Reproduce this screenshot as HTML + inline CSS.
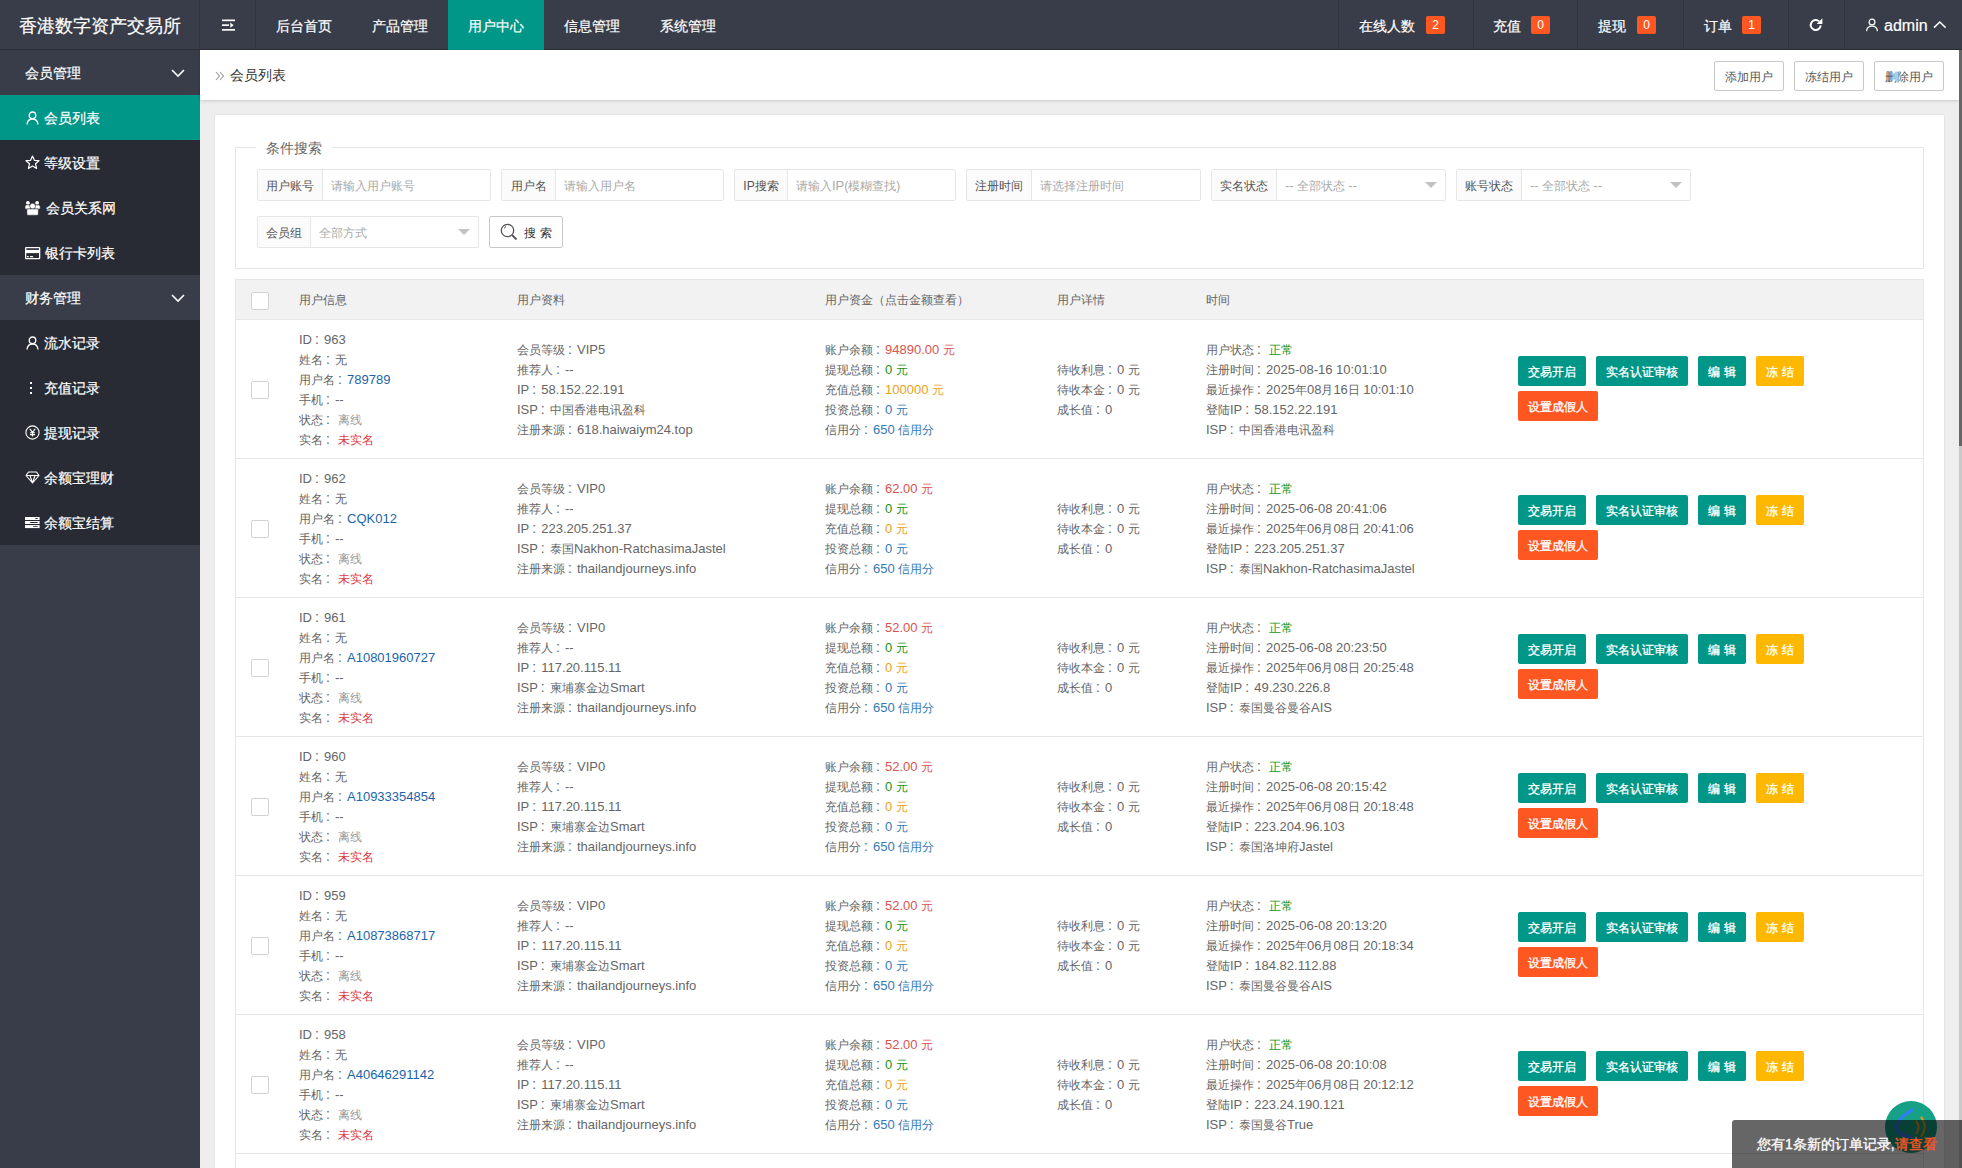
<!DOCTYPE html><html><head><meta charset="utf-8"><title>会员列表</title><style>
*{margin:0;padding:0;box-sizing:border-box}
html,body{width:1962px;height:1168px;overflow:hidden}
body{position:relative;background:#eeeeee;font-family:"Liberation Sans",sans-serif;font-size:12px;color:#666}
.abs{position:absolute}
#hdr{left:0;top:0;width:1962px;height:50px;background:#393D49}
#hdr .line{position:absolute;top:49px;left:0;width:1962px;height:1px;background:#2c2f38}
.sep{position:absolute;top:0;width:1px;height:49px;background:#30343e}
.ht{position:absolute;top:0;height:50px;line-height:50px;font-size:14px;color:#fff;white-space:nowrap}
.badge{position:absolute;top:16px;height:18px;width:19px;line-height:18px;text-align:center;background:#FF5722;color:#fff;font-size:12px;border-radius:2px}
#side{left:0;top:50px;width:200px;height:1118px;background:#393D49}
.sg{position:absolute;left:0;width:200px;height:45px;line-height:45px;font-size:14px;color:#fff}
.si{position:absolute;left:0;width:200px;height:45px;line-height:45px;font-size:14px;color:#fff;background:#282B33}
.si.on{background:#009688}
.ico{position:absolute}
#main{left:200px;top:50px;width:1759px;height:1118px;background:#eeeeee;overflow:hidden}
#sb{left:1959px;top:50px;width:3px;height:1118px;background:#c9c9c9}
#sbt{left:1959px;top:50px;width:3px;height:396px;background:#666}
#crumb{left:200px;top:50px;width:1759px;height:50px;background:#fff;box-shadow:0 1px 3px rgba(0,0,0,.16)}
.tbtn{position:absolute;top:61px;height:30px;width:70px;border:1px solid #c9c9c9;border-radius:2px;background:#fff;color:#555;font-size:12px;line-height:28px;text-align:center}
#card{left:215px;top:115px;width:1729px;height:1100px;background:#fff;box-shadow:0 0 2px rgba(0,0,0,.12)}
#fs{left:235px;top:147px;width:1689px;height:122px;border:1px solid #e6e6e6}
#legend{left:256px;top:137px;height:20px;line-height:20px;padding:0 10px;background:#fff;font-size:14px;color:#666}
.ig{position:absolute;height:32px;border:1px solid #e6e6e6;border-radius:2px;background:#fff}
.ig .lb{position:absolute;left:0;top:0;height:30px;line-height:30px;background:#FBFBFB;border-right:1px solid #e6e6e6;color:#555;font-size:12px;text-align:center}
.ig .ph{position:absolute;top:0;height:30px;line-height:30px;color:#aaa;font-size:12px;white-space:nowrap}
.ig .arr{position:absolute;top:12px;width:0;height:0;border-left:6px solid transparent;border-right:6px solid transparent;border-top:6px solid #c2c2c2}
#tbl{left:235px;top:279px;width:1689px;height:1000px;border:1px solid #e6e6e6;border-bottom:none}
#thead{left:236px;top:280px;width:1687px;height:39px;background:#f2f2f2}
.hline{position:absolute;left:236px;width:1687px;height:1px;background:#e6e6e6}
.th{position:absolute;top:280px;height:39px;line-height:39px;color:#666;font-size:12px;white-space:nowrap}
.cb{position:absolute;width:18px;height:18px;border:1px solid #d2d2d2;border-radius:2px;background:#fff}
.ln{position:absolute;height:20px;line-height:20px;white-space:nowrap;color:#666}
.gy{color:#999}
.red{color:#DC3C45}
.blu{color:#1B64AC}
.rd{color:#D9534F}
.gr{color:#179317}
.og{color:#EC9F18}
.bl{color:#337AB7}
.btn{position:absolute;height:30px;line-height:30px;border-radius:2px;color:#fff;font-size:12px;text-align:center;white-space:nowrap;-webkit-text-stroke:0.3px #fff}
.bt{background:#009688}
.bw{background:#FFB800}
.bd{background:#FF5722}
.ht,.sg>span,.si>span,.ln,.th,.ig .lb,.ig .ph,#legend,.tbtn,.btn{padding-top:1px}
.l{font-size:13px}
.ht,.sg,.si{-webkit-text-stroke:0.2px #fff}
.c{display:inline-block;width:12px;text-indent:2.9px;font-size:14px;line-height:10px}
#toast{left:1732px;top:1120px;width:240px;height:60px;background:rgba(0,0,0,.6);border-radius:3px}
</style></head><body><div id="hdr" class="abs"><div class="line"></div><div class="ht" style="left:19px;font-size:18px;color:#fff">香港数字资产交易所</div><div class="sep" style="left:199px"></div><div class="sep" style="left:255px"></div><div class="sep" style="left:1338px"></div><div class="sep" style="left:1473px"></div><div class="sep" style="left:1577px"></div><div class="sep" style="left:1683px"></div><div class="sep" style="left:1788px"></div><div class="sep" style="left:1844px"></div><svg class="abs" style="left:221px;top:18px" width="16" height="14" viewBox="0 0 16 14"><rect x="1" y="1.5" width="13" height="1.7" fill="#fff"/><rect x="1" y="6.3" width="7" height="1.7" fill="#fff"/><path d="M9.3 4.6 L12.6 7.15 L9.3 9.7 Z" fill="#fff"/><rect x="1" y="11" width="13" height="1.7" fill="#fff"/></svg><div class="abs" style="left:448px;top:0;width:96px;height:50px;background:#009688"></div><div class="ht" style="left:276px">后台首页</div><div class="ht" style="left:372px">产品管理</div><div class="ht" style="left:468px">用户中心</div><div class="ht" style="left:564px">信息管理</div><div class="ht" style="left:660px">系统管理</div><div class="ht" style="left:1359px">在线人数</div><div class="badge" style="left:1426px">2</div><div class="ht" style="left:1493px">充值</div><div class="badge" style="left:1531px">0</div><div class="ht" style="left:1598px">提现</div><div class="badge" style="left:1637px">0</div><div class="ht" style="left:1704px">订单</div><div class="badge" style="left:1742px">1</div><svg class="abs" style="left:1808px;top:18px" width="15" height="14" viewBox="0 0 15 14"><path d="M12.7 7.4 A5 5 0 1 1 11.2 3.4" fill="none" stroke="#fff" stroke-width="2"/><path d="M14.4 0.2 L14.4 5.9 L8.7 5.9 Z" fill="#fff"/></svg><svg class="abs" style="left:1865px;top:18px" width="13" height="14" viewBox="0 0 13 14"><circle cx="7" cy="4" r="2.9" fill="none" stroke="#fff" stroke-width="1.2"/><path d="M1.6 13.2 Q2 8.2 7 8.2 Q12 8.2 12.4 13.2" fill="none" stroke="#fff" stroke-width="1.2"/></svg><div class="ht" style="left:1884px;font-size:16px">admin</div><svg class="abs" style="left:1933px;top:20px" width="14" height="9" viewBox="0 0 14 9"><path d="M1 7.6 L6.8 2 L12.6 7.6" fill="none" stroke="#fff" stroke-width="1.5"/></svg></div><div id="side" class="abs"><div class="sg" style="top:0"><span class="abs" style="left:25px">会员管理</span><svg class="abs" style="left:171px;top:19px" width="14" height="9" viewBox="0 0 14 9"><path d="M1 1 L7 7 L13 1" fill="none" stroke="#fff" stroke-width="1.6"/></svg></div><div class="si on" style="top:45px"><svg class="ico" style="left:26px;top:16px" width="13" height="14" viewBox="0 0 13 14"><circle cx="6.5" cy="4.3" r="3.3" fill="none" stroke="#fff" stroke-width="1.3"/><path d="M1 13.5 Q1.5 8 6.5 8 Q11.5 8 12 13.5" fill="none" stroke="#fff" stroke-width="1.3"/></svg><span class="abs" style="left:44px">会员列表</span></div><div class="si" style="top:90px"><svg class="ico" style="left:25px;top:15px" width="15" height="15" viewBox="0 0 15 15"><path d="M7.5 1 L9.4 5.3 L14 5.7 L10.5 8.8 L11.6 13.5 L7.5 11 L3.4 13.5 L4.5 8.8 L1 5.7 L5.6 5.3 Z" fill="none" stroke="#fff" stroke-width="1.2" stroke-linejoin="round"/></svg><span class="abs" style="left:44px">等级设置</span></div><div class="si" style="top:135px"><svg class="ico" style="left:25px;top:16px" width="16" height="15" viewBox="0 0 16 15"><circle cx="2.9" cy="1.9" r="1.9" fill="#fff"/><circle cx="12.1" cy="1.9" r="1.9" fill="#fff"/><path d="M0 8 L0 5.4 Q0 3.9 1.5 3.9 L4.3 3.9 Q5.6 3.9 5.6 5.4 L5.6 8 Z" fill="#fff" stroke="#282B33" stroke-width="0.6"/><path d="M9.6 8 L9.6 5.4 Q9.6 3.9 11 3.9 L13.7 3.9 Q15.2 3.9 15.2 5.4 L15.2 8 Z" fill="#fff" stroke="#282B33" stroke-width="0.6"/><circle cx="7.6" cy="5.1" r="2.9" fill="#fff" stroke="#282B33" stroke-width="0.6"/><path d="M1.9 8.4 Q1.9 8 2.4 8 L12.8 8 Q13.3 8 13.3 8.4 L13.3 13 Q13.3 14.2 12 14.2 L3.2 14.2 Q1.9 14.2 1.9 13 Z" fill="#fff" stroke="#282B33" stroke-width="0.5"/></svg><span class="abs" style="left:46px">会员关系网</span></div><div class="si" style="top:180px"><svg class="ico" style="left:25px;top:17px" width="16" height="13" viewBox="0 0 16 13"><rect x="0.65" y="0.65" width="14" height="11" rx="0.6" fill="none" stroke="#fff" stroke-width="1.3"/><rect x="0.6" y="2.9" width="14.1" height="3.2" fill="#fff"/><rect x="2" y="9" width="1.9" height="1.2" rx="0.5" fill="#fff"/><rect x="5" y="9" width="3.1" height="1.2" rx="0.5" fill="#fff"/></svg><span class="abs" style="left:45px">银行卡列表</span></div><div class="sg" style="top:225px"><span class="abs" style="left:25px">财务管理</span><svg class="abs" style="left:171px;top:19px" width="14" height="9" viewBox="0 0 14 9"><path d="M1 1 L7 7 L13 1" fill="none" stroke="#fff" stroke-width="1.6"/></svg></div><div class="si" style="top:270px"><svg class="ico" style="left:26px;top:16px" width="13" height="14" viewBox="0 0 13 14"><circle cx="6.5" cy="4.3" r="3.3" fill="none" stroke="#fff" stroke-width="1.3"/><path d="M1 13.5 Q1.5 8 6.5 8 Q11.5 8 12 13.5" fill="none" stroke="#fff" stroke-width="1.3"/></svg><span class="abs" style="left:44px">流水记录</span></div><div class="si" style="top:315px"><svg class="ico" style="left:29px;top:16px" width="4" height="14" viewBox="0 0 4 14"><rect x="1" y="1" width="2" height="2" fill="#fff"/><rect x="1" y="6" width="2" height="2" fill="#fff"/><rect x="1" y="11" width="2" height="2" fill="#fff"/></svg><span class="abs" style="left:44px">充值记录</span></div><div class="si" style="top:360px"><svg class="ico" style="left:25px;top:15px" width="15" height="15" viewBox="0 0 15 15"><circle cx="7.5" cy="7.5" r="6.6" fill="none" stroke="#fff" stroke-width="1.1"/><path d="M4.8 3.8 L7.5 7.3 L10.2 3.8 M7.5 7.3 L7.5 11.5 M5 7.8 L10 7.8 M5 9.6 L10 9.6" fill="none" stroke="#fff" stroke-width="1.1"/></svg><span class="abs" style="left:44px">提现记录</span></div><div class="si" style="top:405px"><svg class="ico" style="left:25px;top:16px" width="15" height="13" viewBox="0 0 15 13"><path d="M3.5 1 L11.5 1 L14 4.5 L7.5 12 L1 4.5 Z M1 4.5 L14 4.5 M5 4.5 L7.5 12 L10 4.5" fill="none" stroke="#fff" stroke-width="1.1" stroke-linejoin="round"/></svg><span class="abs" style="left:44px">余额宝理财</span></div><div class="si" style="top:450px"><svg class="ico" style="left:25px;top:17px" width="15" height="12" viewBox="0 0 15 12"><rect x="0" y="0" width="14.6" height="3" fill="#fff"/><rect x="0" y="4" width="14.6" height="3" fill="#fff"/><rect x="0" y="8.1" width="14.6" height="3" fill="#fff"/><rect x="10.2" y="1.1" width="2.6" height="0.9" rx="0.4" fill="#282B33"/><rect x="5" y="5.1" width="7.8" height="0.9" rx="0.4" fill="#282B33"/><rect x="8" y="9.2" width="4.8" height="0.9" rx="0.4" fill="#282B33"/></svg><span class="abs" style="left:44px">余额宝结算</span></div></div><div id="main" class="abs"></div><div id="crumb" class="abs"></div><svg class="abs" style="left:215px;top:71px" width="10" height="10" viewBox="0 0 10 10"><path d="M1 1 L4.5 5 L1 9 M5 1 L8.5 5 L5 9" fill="none" stroke="#999" stroke-width="1.1"/></svg><div class="abs" style="left:230px;top:65px;height:20px;line-height:20px;font-size:14px;color:#333">会员列表</div><div class="tbtn" style="left:1714px">添加用户</div><div class="tbtn" style="left:1794px">冻结用户</div><div class="tbtn" style="left:1874px">删除用户</div><div id="card" class="abs"></div><div id="fs" class="abs"></div><div id="legend" class="abs">条件搜索</div><div class="ig" style="left:257px;top:169px;width:234px"><div class="lb" style="width:65px">用户账号</div><div class="ph" style="left:73px">请输入用户账号</div></div><div class="ig" style="left:501px;top:169px;width:223px"><div class="lb" style="width:54px">用户名</div><div class="ph" style="left:62px">请输入用户名</div></div><div class="ig" style="left:734px;top:169px;width:222px"><div class="lb" style="width:53px">IP搜索</div><div class="ph" style="left:61px">请输入<span class="l">IP</span>(模糊查找)</div></div><div class="ig" style="left:966px;top:169px;width:235px"><div class="lb" style="width:65px">注册时间</div><div class="ph" style="left:73px">请选择注册时间</div></div><div class="ig" style="left:1211px;top:169px;width:235px"><div class="lb" style="width:65px">实名状态</div><div class="ph" style="left:73px"><span class="l">--</span> 全部状态 <span class="l">--</span></div><div class="arr" style="left:213px"></div></div><div class="ig" style="left:1456px;top:169px;width:235px"><div class="lb" style="width:65px">账号状态</div><div class="ph" style="left:73px"><span class="l">--</span> 全部状态 <span class="l">--</span></div><div class="arr" style="left:213px"></div></div><div class="ig" style="left:257px;top:216px;width:222px"><div class="lb" style="width:53px">会员组</div><div class="ph" style="left:61px">全部方式</div><div class="arr" style="left:200px"></div></div><div class="abs" style="left:489px;top:216px;width:74px;height:32px;border:1px solid #c9c9c9;border-radius:2px;background:#fff"></div><svg class="abs" style="left:500px;top:223px" width="18" height="18" viewBox="0 0 18 18"><circle cx="7.5" cy="7.5" r="6.2" fill="none" stroke="#555" stroke-width="1.3"/><path d="M12 12 L16.5 16.5" stroke="#555" stroke-width="1.8"/><path d="M4.5 5.5 Q4.5 4 6 3.5" fill="none" stroke="#555" stroke-width="1"/></svg><div class="abs" style="left:524px;top:223px;height:20px;line-height:20px;font-size:12px;color:#333;letter-spacing:4px">搜索</div><div id="tbl" class="abs"></div><div id="thead" class="abs"></div><div class="hline" style="top:319px"></div><div class="cb" style="left:251px;top:292px"></div><div class="th" style="left:299px">用户信息</div><div class="th" style="left:517px">用户资料</div><div class="th" style="left:825px">用户资金（点击金额查看）</div><div class="th" style="left:1057px">用户详情</div><div class="th" style="left:1206px">时间</div><div class="cb" style="left:251px;top:381px"></div><div class="ln" style="left:299px;top:329px"><span class="l">ID</span><span class="c">:</span><span class="l">963</span></div><div class="ln" style="left:299px;top:349px">姓名<span class="c">:</span>无</div><div class="ln" style="left:299px;top:369px">用户名<span class="c">:</span><span class="blu"><span class="l">789789</span></span></div><div class="ln" style="left:299px;top:389px">手机<span class="c">:</span><span class="l">--</span></div><div class="ln" style="left:299px;top:409px">状态<span class="c">:</span> <span class="gy">离线</span></div><div class="ln" style="left:299px;top:429px">实名<span class="c">:</span> <span class="red">未实名</span></div><div class="ln" style="left:517px;top:339px">会员等级<span class="c">:</span><span class="l">VIP5</span></div><div class="ln" style="left:517px;top:359px">推荐人<span class="c">:</span><span class="l">--</span></div><div class="ln" style="left:517px;top:379px"><span class="l">IP</span><span class="c">:</span><span class="l">58.152.22.191</span></div><div class="ln" style="left:517px;top:399px"><span class="l">ISP</span><span class="c">:</span>中国香港电讯盈科</div><div class="ln" style="left:517px;top:419px">注册来源<span class="c">:</span><span class="l">618.haiwaiym24.top</span></div><div class="ln" style="left:825px;top:339px">账户余额<span class="c">:</span><span class="rd"><span class="l">94890.00</span> 元</span></div><div class="ln" style="left:825px;top:359px">提现总额<span class="c">:</span><span class="gr"><span class="l">0</span> 元</span></div><div class="ln" style="left:825px;top:379px">充值总额<span class="c">:</span><span class="og"><span class="l">100000</span> 元</span></div><div class="ln" style="left:825px;top:399px">投资总额<span class="c">:</span><span class="bl"><span class="l">0</span> 元</span></div><div class="ln" style="left:825px;top:419px">信用分<span class="c">:</span><span class="bl"><span class="l">650</span> 信用分</span></div><div class="ln" style="left:1057px;top:359px">待收利息<span class="c">:</span><span class="l">0</span> 元</div><div class="ln" style="left:1057px;top:379px">待收本金<span class="c">:</span><span class="l">0</span> 元</div><div class="ln" style="left:1057px;top:399px">成长值<span class="c">:</span><span class="l">0</span></div><div class="ln" style="left:1206px;top:339px">用户状态<span class="c">:</span> <span class="gr">正常</span></div><div class="ln" style="left:1206px;top:359px">注册时间<span class="c">:</span><span class="l">2025-08-16 10:01:10</span></div><div class="ln" style="left:1206px;top:379px">最近操作<span class="c">:</span><span class="l">2025</span>年<span class="l">08</span>月<span class="l">16</span>日 <span class="l">10:01:10</span></div><div class="ln" style="left:1206px;top:399px">登陆<span class="l">IP</span><span class="c">:</span><span class="l">58.152.22.191</span></div><div class="ln" style="left:1206px;top:419px"><span class="l">ISP</span><span class="c">:</span>中国香港电讯盈科</div><div class="btn bt" style="left:1518px;top:356px;width:68px">交易开启</div><div class="btn bt" style="left:1596px;top:356px;width:92px">实名认证审核</div><div class="btn bt" style="left:1698px;top:356px;width:48px;letter-spacing:4px;text-indent:4px">编辑</div><div class="btn bw" style="left:1756px;top:356px;width:48px;letter-spacing:4px;text-indent:4px">冻结</div><div class="btn bd" style="left:1518px;top:391px;width:80px">设置成假人</div><div class="hline" style="top:458px"></div><div class="cb" style="left:251px;top:520px"></div><div class="ln" style="left:299px;top:468px"><span class="l">ID</span><span class="c">:</span><span class="l">962</span></div><div class="ln" style="left:299px;top:488px">姓名<span class="c">:</span>无</div><div class="ln" style="left:299px;top:508px">用户名<span class="c">:</span><span class="blu"><span class="l">CQK012</span></span></div><div class="ln" style="left:299px;top:528px">手机<span class="c">:</span><span class="l">--</span></div><div class="ln" style="left:299px;top:548px">状态<span class="c">:</span> <span class="gy">离线</span></div><div class="ln" style="left:299px;top:568px">实名<span class="c">:</span> <span class="red">未实名</span></div><div class="ln" style="left:517px;top:478px">会员等级<span class="c">:</span><span class="l">VIP0</span></div><div class="ln" style="left:517px;top:498px">推荐人<span class="c">:</span><span class="l">--</span></div><div class="ln" style="left:517px;top:518px"><span class="l">IP</span><span class="c">:</span><span class="l">223.205.251.37</span></div><div class="ln" style="left:517px;top:538px"><span class="l">ISP</span><span class="c">:</span>泰国<span class="l">Nakhon-RatchasimaJastel</span></div><div class="ln" style="left:517px;top:558px">注册来源<span class="c">:</span><span class="l">thailandjourneys.info</span></div><div class="ln" style="left:825px;top:478px">账户余额<span class="c">:</span><span class="rd"><span class="l">62.00</span> 元</span></div><div class="ln" style="left:825px;top:498px">提现总额<span class="c">:</span><span class="gr"><span class="l">0</span> 元</span></div><div class="ln" style="left:825px;top:518px">充值总额<span class="c">:</span><span class="og"><span class="l">0</span> 元</span></div><div class="ln" style="left:825px;top:538px">投资总额<span class="c">:</span><span class="bl"><span class="l">0</span> 元</span></div><div class="ln" style="left:825px;top:558px">信用分<span class="c">:</span><span class="bl"><span class="l">650</span> 信用分</span></div><div class="ln" style="left:1057px;top:498px">待收利息<span class="c">:</span><span class="l">0</span> 元</div><div class="ln" style="left:1057px;top:518px">待收本金<span class="c">:</span><span class="l">0</span> 元</div><div class="ln" style="left:1057px;top:538px">成长值<span class="c">:</span><span class="l">0</span></div><div class="ln" style="left:1206px;top:478px">用户状态<span class="c">:</span> <span class="gr">正常</span></div><div class="ln" style="left:1206px;top:498px">注册时间<span class="c">:</span><span class="l">2025-06-08 20:41:06</span></div><div class="ln" style="left:1206px;top:518px">最近操作<span class="c">:</span><span class="l">2025</span>年<span class="l">06</span>月<span class="l">08</span>日 <span class="l">20:41:06</span></div><div class="ln" style="left:1206px;top:538px">登陆<span class="l">IP</span><span class="c">:</span><span class="l">223.205.251.37</span></div><div class="ln" style="left:1206px;top:558px"><span class="l">ISP</span><span class="c">:</span>泰国<span class="l">Nakhon-RatchasimaJastel</span></div><div class="btn bt" style="left:1518px;top:495px;width:68px">交易开启</div><div class="btn bt" style="left:1596px;top:495px;width:92px">实名认证审核</div><div class="btn bt" style="left:1698px;top:495px;width:48px;letter-spacing:4px;text-indent:4px">编辑</div><div class="btn bw" style="left:1756px;top:495px;width:48px;letter-spacing:4px;text-indent:4px">冻结</div><div class="btn bd" style="left:1518px;top:530px;width:80px">设置成假人</div><div class="hline" style="top:597px"></div><div class="cb" style="left:251px;top:659px"></div><div class="ln" style="left:299px;top:607px"><span class="l">ID</span><span class="c">:</span><span class="l">961</span></div><div class="ln" style="left:299px;top:627px">姓名<span class="c">:</span>无</div><div class="ln" style="left:299px;top:647px">用户名<span class="c">:</span><span class="blu"><span class="l">A10801960727</span></span></div><div class="ln" style="left:299px;top:667px">手机<span class="c">:</span><span class="l">--</span></div><div class="ln" style="left:299px;top:687px">状态<span class="c">:</span> <span class="gy">离线</span></div><div class="ln" style="left:299px;top:707px">实名<span class="c">:</span> <span class="red">未实名</span></div><div class="ln" style="left:517px;top:617px">会员等级<span class="c">:</span><span class="l">VIP0</span></div><div class="ln" style="left:517px;top:637px">推荐人<span class="c">:</span><span class="l">--</span></div><div class="ln" style="left:517px;top:657px"><span class="l">IP</span><span class="c">:</span><span class="l">117.20.115.11</span></div><div class="ln" style="left:517px;top:677px"><span class="l">ISP</span><span class="c">:</span>柬埔寨金边<span class="l">Smart</span></div><div class="ln" style="left:517px;top:697px">注册来源<span class="c">:</span><span class="l">thailandjourneys.info</span></div><div class="ln" style="left:825px;top:617px">账户余额<span class="c">:</span><span class="rd"><span class="l">52.00</span> 元</span></div><div class="ln" style="left:825px;top:637px">提现总额<span class="c">:</span><span class="gr"><span class="l">0</span> 元</span></div><div class="ln" style="left:825px;top:657px">充值总额<span class="c">:</span><span class="og"><span class="l">0</span> 元</span></div><div class="ln" style="left:825px;top:677px">投资总额<span class="c">:</span><span class="bl"><span class="l">0</span> 元</span></div><div class="ln" style="left:825px;top:697px">信用分<span class="c">:</span><span class="bl"><span class="l">650</span> 信用分</span></div><div class="ln" style="left:1057px;top:637px">待收利息<span class="c">:</span><span class="l">0</span> 元</div><div class="ln" style="left:1057px;top:657px">待收本金<span class="c">:</span><span class="l">0</span> 元</div><div class="ln" style="left:1057px;top:677px">成长值<span class="c">:</span><span class="l">0</span></div><div class="ln" style="left:1206px;top:617px">用户状态<span class="c">:</span> <span class="gr">正常</span></div><div class="ln" style="left:1206px;top:637px">注册时间<span class="c">:</span><span class="l">2025-06-08 20:23:50</span></div><div class="ln" style="left:1206px;top:657px">最近操作<span class="c">:</span><span class="l">2025</span>年<span class="l">06</span>月<span class="l">08</span>日 <span class="l">20:25:48</span></div><div class="ln" style="left:1206px;top:677px">登陆<span class="l">IP</span><span class="c">:</span><span class="l">49.230.226.8</span></div><div class="ln" style="left:1206px;top:697px"><span class="l">ISP</span><span class="c">:</span>泰国曼谷曼谷<span class="l">AIS</span></div><div class="btn bt" style="left:1518px;top:634px;width:68px">交易开启</div><div class="btn bt" style="left:1596px;top:634px;width:92px">实名认证审核</div><div class="btn bt" style="left:1698px;top:634px;width:48px;letter-spacing:4px;text-indent:4px">编辑</div><div class="btn bw" style="left:1756px;top:634px;width:48px;letter-spacing:4px;text-indent:4px">冻结</div><div class="btn bd" style="left:1518px;top:669px;width:80px">设置成假人</div><div class="hline" style="top:736px"></div><div class="cb" style="left:251px;top:798px"></div><div class="ln" style="left:299px;top:746px"><span class="l">ID</span><span class="c">:</span><span class="l">960</span></div><div class="ln" style="left:299px;top:766px">姓名<span class="c">:</span>无</div><div class="ln" style="left:299px;top:786px">用户名<span class="c">:</span><span class="blu"><span class="l">A10933354854</span></span></div><div class="ln" style="left:299px;top:806px">手机<span class="c">:</span><span class="l">--</span></div><div class="ln" style="left:299px;top:826px">状态<span class="c">:</span> <span class="gy">离线</span></div><div class="ln" style="left:299px;top:846px">实名<span class="c">:</span> <span class="red">未实名</span></div><div class="ln" style="left:517px;top:756px">会员等级<span class="c">:</span><span class="l">VIP0</span></div><div class="ln" style="left:517px;top:776px">推荐人<span class="c">:</span><span class="l">--</span></div><div class="ln" style="left:517px;top:796px"><span class="l">IP</span><span class="c">:</span><span class="l">117.20.115.11</span></div><div class="ln" style="left:517px;top:816px"><span class="l">ISP</span><span class="c">:</span>柬埔寨金边<span class="l">Smart</span></div><div class="ln" style="left:517px;top:836px">注册来源<span class="c">:</span><span class="l">thailandjourneys.info</span></div><div class="ln" style="left:825px;top:756px">账户余额<span class="c">:</span><span class="rd"><span class="l">52.00</span> 元</span></div><div class="ln" style="left:825px;top:776px">提现总额<span class="c">:</span><span class="gr"><span class="l">0</span> 元</span></div><div class="ln" style="left:825px;top:796px">充值总额<span class="c">:</span><span class="og"><span class="l">0</span> 元</span></div><div class="ln" style="left:825px;top:816px">投资总额<span class="c">:</span><span class="bl"><span class="l">0</span> 元</span></div><div class="ln" style="left:825px;top:836px">信用分<span class="c">:</span><span class="bl"><span class="l">650</span> 信用分</span></div><div class="ln" style="left:1057px;top:776px">待收利息<span class="c">:</span><span class="l">0</span> 元</div><div class="ln" style="left:1057px;top:796px">待收本金<span class="c">:</span><span class="l">0</span> 元</div><div class="ln" style="left:1057px;top:816px">成长值<span class="c">:</span><span class="l">0</span></div><div class="ln" style="left:1206px;top:756px">用户状态<span class="c">:</span> <span class="gr">正常</span></div><div class="ln" style="left:1206px;top:776px">注册时间<span class="c">:</span><span class="l">2025-06-08 20:15:42</span></div><div class="ln" style="left:1206px;top:796px">最近操作<span class="c">:</span><span class="l">2025</span>年<span class="l">06</span>月<span class="l">08</span>日 <span class="l">20:18:48</span></div><div class="ln" style="left:1206px;top:816px">登陆<span class="l">IP</span><span class="c">:</span><span class="l">223.204.96.103</span></div><div class="ln" style="left:1206px;top:836px"><span class="l">ISP</span><span class="c">:</span>泰国洛坤府<span class="l">Jastel</span></div><div class="btn bt" style="left:1518px;top:773px;width:68px">交易开启</div><div class="btn bt" style="left:1596px;top:773px;width:92px">实名认证审核</div><div class="btn bt" style="left:1698px;top:773px;width:48px;letter-spacing:4px;text-indent:4px">编辑</div><div class="btn bw" style="left:1756px;top:773px;width:48px;letter-spacing:4px;text-indent:4px">冻结</div><div class="btn bd" style="left:1518px;top:808px;width:80px">设置成假人</div><div class="hline" style="top:875px"></div><div class="cb" style="left:251px;top:937px"></div><div class="ln" style="left:299px;top:885px"><span class="l">ID</span><span class="c">:</span><span class="l">959</span></div><div class="ln" style="left:299px;top:905px">姓名<span class="c">:</span>无</div><div class="ln" style="left:299px;top:925px">用户名<span class="c">:</span><span class="blu"><span class="l">A10873868717</span></span></div><div class="ln" style="left:299px;top:945px">手机<span class="c">:</span><span class="l">--</span></div><div class="ln" style="left:299px;top:965px">状态<span class="c">:</span> <span class="gy">离线</span></div><div class="ln" style="left:299px;top:985px">实名<span class="c">:</span> <span class="red">未实名</span></div><div class="ln" style="left:517px;top:895px">会员等级<span class="c">:</span><span class="l">VIP0</span></div><div class="ln" style="left:517px;top:915px">推荐人<span class="c">:</span><span class="l">--</span></div><div class="ln" style="left:517px;top:935px"><span class="l">IP</span><span class="c">:</span><span class="l">117.20.115.11</span></div><div class="ln" style="left:517px;top:955px"><span class="l">ISP</span><span class="c">:</span>柬埔寨金边<span class="l">Smart</span></div><div class="ln" style="left:517px;top:975px">注册来源<span class="c">:</span><span class="l">thailandjourneys.info</span></div><div class="ln" style="left:825px;top:895px">账户余额<span class="c">:</span><span class="rd"><span class="l">52.00</span> 元</span></div><div class="ln" style="left:825px;top:915px">提现总额<span class="c">:</span><span class="gr"><span class="l">0</span> 元</span></div><div class="ln" style="left:825px;top:935px">充值总额<span class="c">:</span><span class="og"><span class="l">0</span> 元</span></div><div class="ln" style="left:825px;top:955px">投资总额<span class="c">:</span><span class="bl"><span class="l">0</span> 元</span></div><div class="ln" style="left:825px;top:975px">信用分<span class="c">:</span><span class="bl"><span class="l">650</span> 信用分</span></div><div class="ln" style="left:1057px;top:915px">待收利息<span class="c">:</span><span class="l">0</span> 元</div><div class="ln" style="left:1057px;top:935px">待收本金<span class="c">:</span><span class="l">0</span> 元</div><div class="ln" style="left:1057px;top:955px">成长值<span class="c">:</span><span class="l">0</span></div><div class="ln" style="left:1206px;top:895px">用户状态<span class="c">:</span> <span class="gr">正常</span></div><div class="ln" style="left:1206px;top:915px">注册时间<span class="c">:</span><span class="l">2025-06-08 20:13:20</span></div><div class="ln" style="left:1206px;top:935px">最近操作<span class="c">:</span><span class="l">2025</span>年<span class="l">06</span>月<span class="l">08</span>日 <span class="l">20:18:34</span></div><div class="ln" style="left:1206px;top:955px">登陆<span class="l">IP</span><span class="c">:</span><span class="l">184.82.112.88</span></div><div class="ln" style="left:1206px;top:975px"><span class="l">ISP</span><span class="c">:</span>泰国曼谷曼谷<span class="l">AIS</span></div><div class="btn bt" style="left:1518px;top:912px;width:68px">交易开启</div><div class="btn bt" style="left:1596px;top:912px;width:92px">实名认证审核</div><div class="btn bt" style="left:1698px;top:912px;width:48px;letter-spacing:4px;text-indent:4px">编辑</div><div class="btn bw" style="left:1756px;top:912px;width:48px;letter-spacing:4px;text-indent:4px">冻结</div><div class="btn bd" style="left:1518px;top:947px;width:80px">设置成假人</div><div class="hline" style="top:1014px"></div><div class="cb" style="left:251px;top:1076px"></div><div class="ln" style="left:299px;top:1024px"><span class="l">ID</span><span class="c">:</span><span class="l">958</span></div><div class="ln" style="left:299px;top:1044px">姓名<span class="c">:</span>无</div><div class="ln" style="left:299px;top:1064px">用户名<span class="c">:</span><span class="blu"><span class="l">A40646291142</span></span></div><div class="ln" style="left:299px;top:1084px">手机<span class="c">:</span><span class="l">--</span></div><div class="ln" style="left:299px;top:1104px">状态<span class="c">:</span> <span class="gy">离线</span></div><div class="ln" style="left:299px;top:1124px">实名<span class="c">:</span> <span class="red">未实名</span></div><div class="ln" style="left:517px;top:1034px">会员等级<span class="c">:</span><span class="l">VIP0</span></div><div class="ln" style="left:517px;top:1054px">推荐人<span class="c">:</span><span class="l">--</span></div><div class="ln" style="left:517px;top:1074px"><span class="l">IP</span><span class="c">:</span><span class="l">117.20.115.11</span></div><div class="ln" style="left:517px;top:1094px"><span class="l">ISP</span><span class="c">:</span>柬埔寨金边<span class="l">Smart</span></div><div class="ln" style="left:517px;top:1114px">注册来源<span class="c">:</span><span class="l">thailandjourneys.info</span></div><div class="ln" style="left:825px;top:1034px">账户余额<span class="c">:</span><span class="rd"><span class="l">52.00</span> 元</span></div><div class="ln" style="left:825px;top:1054px">提现总额<span class="c">:</span><span class="gr"><span class="l">0</span> 元</span></div><div class="ln" style="left:825px;top:1074px">充值总额<span class="c">:</span><span class="og"><span class="l">0</span> 元</span></div><div class="ln" style="left:825px;top:1094px">投资总额<span class="c">:</span><span class="bl"><span class="l">0</span> 元</span></div><div class="ln" style="left:825px;top:1114px">信用分<span class="c">:</span><span class="bl"><span class="l">650</span> 信用分</span></div><div class="ln" style="left:1057px;top:1054px">待收利息<span class="c">:</span><span class="l">0</span> 元</div><div class="ln" style="left:1057px;top:1074px">待收本金<span class="c">:</span><span class="l">0</span> 元</div><div class="ln" style="left:1057px;top:1094px">成长值<span class="c">:</span><span class="l">0</span></div><div class="ln" style="left:1206px;top:1034px">用户状态<span class="c">:</span> <span class="gr">正常</span></div><div class="ln" style="left:1206px;top:1054px">注册时间<span class="c">:</span><span class="l">2025-06-08 20:10:08</span></div><div class="ln" style="left:1206px;top:1074px">最近操作<span class="c">:</span><span class="l">2025</span>年<span class="l">06</span>月<span class="l">08</span>日 <span class="l">20:12:12</span></div><div class="ln" style="left:1206px;top:1094px">登陆<span class="l">IP</span><span class="c">:</span><span class="l">223.24.190.121</span></div><div class="ln" style="left:1206px;top:1114px"><span class="l">ISP</span><span class="c">:</span>泰国曼谷<span class="l">True</span></div><div class="btn bt" style="left:1518px;top:1051px;width:68px">交易开启</div><div class="btn bt" style="left:1596px;top:1051px;width:92px">实名认证审核</div><div class="btn bt" style="left:1698px;top:1051px;width:48px;letter-spacing:4px;text-indent:4px">编辑</div><div class="btn bw" style="left:1756px;top:1051px;width:48px;letter-spacing:4px;text-indent:4px">冻结</div><div class="btn bd" style="left:1518px;top:1086px;width:80px">设置成假人</div><div class="hline" style="top:1153px"></div><div id="sb" class="abs"></div><div id="sbt" class="abs"></div><div class="abs" style="left:1885px;top:1101px;width:52px;height:52px;border-radius:50%;background:#16A086"></div><svg class="abs" style="left:1885px;top:1101px" width="52" height="52" viewBox="0 0 52 52"><path d="M27 9 Q14 16 11 26 Q12 34 26 36" fill="none" stroke="#2F80ED" stroke-width="3.5" stroke-linecap="round"/><path d="M31.5 20.5 Q35.5 26 31.5 32" fill="none" stroke="#E39A1A" stroke-width="2.2" stroke-linecap="round"/><path d="M36.5 16.5 Q43 26 36.5 35" fill="none" stroke="#E39A1A" stroke-width="2.2" stroke-linecap="round"/></svg><div id="toast" class="abs"></div><div class="abs" style="left:1757px;top:1134px;height:20px;line-height:20px;font-size:14px;color:#fff;white-space:nowrap;-webkit-text-stroke:0.3px currentColor">您有1条新的订单记录,<span style="color:#FF5722">请查看</span></div></body></html>
